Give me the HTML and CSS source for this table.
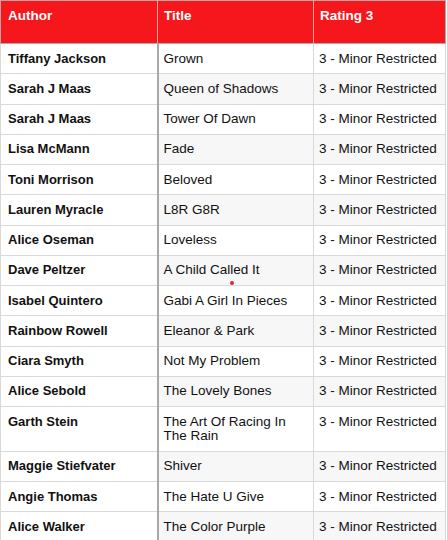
FILE: index.html
```html
<!DOCTYPE html>
<html>
<head>
<meta charset="utf-8">
<link rel="stylesheet" href="styles.css">
</head>
<body>
<div class="wrap">
<table class="grid">
  <colgroup>
    <col class="c-author">
    <col class="c-title">
    <col class="c-rating">
  </colgroup>
  <thead>
    <tr><th>Author</th><th>Title</th><th>Rating 3</th></tr>
  </thead>
  <tbody>
    <tr><td>Tiffany Jackson</td><td>Grown</td><td>3 - Minor Restricted</td></tr>
    <tr><td>Sarah J Maas</td><td>Queen of Shadows</td><td>3 - Minor Restricted</td></tr>
    <tr><td>Sarah J Maas</td><td>Tower Of Dawn</td><td>3 - Minor Restricted</td></tr>
    <tr><td>Lisa McMann</td><td>Fade</td><td>3 - Minor Restricted</td></tr>
    <tr><td>Toni Morrison</td><td>Beloved</td><td>3 - Minor Restricted</td></tr>
    <tr><td>Lauren Myracle</td><td>L8R G8R</td><td>3 - Minor Restricted</td></tr>
    <tr><td>Alice Oseman</td><td>Loveless</td><td>3 - Minor Restricted</td></tr>
    <tr><td>Dave Peltzer</td><td>A Child Called It</td><td>3 - Minor Restricted</td></tr>
    <tr><td>Isabel Quintero</td><td>Gabi A Girl In Pieces</td><td>3 - Minor Restricted</td></tr>
    <tr><td>Rainbow Rowell</td><td>Eleanor &amp; Park</td><td>3 - Minor Restricted</td></tr>
    <tr><td>Ciara Smyth</td><td>Not My Problem</td><td>3 - Minor Restricted</td></tr>
    <tr><td>Alice Sebold</td><td>The Lovely Bones</td><td>3 - Minor Restricted</td></tr>
    <tr><td>Garth Stein</td><td>The Art Of Racing In The Rain</td><td>3 - Minor Restricted</td></tr>
    <tr><td>Maggie Stiefvater</td><td>Shiver</td><td>3 - Minor Restricted</td></tr>
    <tr><td>Angie Thomas</td><td>The Hate U Give</td><td>3 - Minor Restricted</td></tr>
    <tr><td>Alice Walker</td><td>The Color Purple</td><td>3 - Minor Restricted</td></tr>
  </tbody>
</table>
<span class="dot"></span>
</div>
</body>
</html>
```
FILE: styles.css
```css
html, body {
  margin: 0;
  padding: 0;
  background: #fff;
}
body {
  font-family: "Liberation Sans", Arial, Helvetica, sans-serif;
  font-size: 13.5px;
  color: #111;
  overflow: hidden;
}
.wrap {
  position: relative;
  width: 447px;
}
.grid {
  border-collapse: collapse;
  table-layout: fixed;
  width: 446px;
}
.c-author { width: 157px; }
.c-title { width: 156px; }
.grid th {
  background: #f5171c;
  color: #fff;
  font-weight: bold;
  text-align: left;
  vertical-align: top;
  height: 28px;
  padding: 8px 6px 6px;
  line-height: 14px;
  border: 1px solid #b9a5a5;
  border-left-color: #f4a8a8;
  border-right-color: #f4a8a8;
}
.grid th:first-child { border-left-color: #b9a5a5; padding-left: 7px; }
.grid th:last-child { border-right-color: #b9a5a5; }
.grid td {
  vertical-align: top;
  line-height: 14.5px;
  padding: 7.5px 5px 7.25px 5px;
  border: 1px solid #d9d9d9;
}
.grid td:first-child {
  font-weight: bold;
  font-size: 13px;
  background: #fff;
  border-right: 2px solid #a9a9a9;
  padding-left: 7px;
}
.grid tbody tr:nth-child(even) td { background: #f7f7f7; }
.grid tbody tr:nth-child(even) td:first-child { background: #fff; }
.dot {
  position: absolute;
  left: 230px;
  top: 281px;
  width: 4px;
  height: 4px;
  border-radius: 50%;
  background: #e3262b;
}
```
